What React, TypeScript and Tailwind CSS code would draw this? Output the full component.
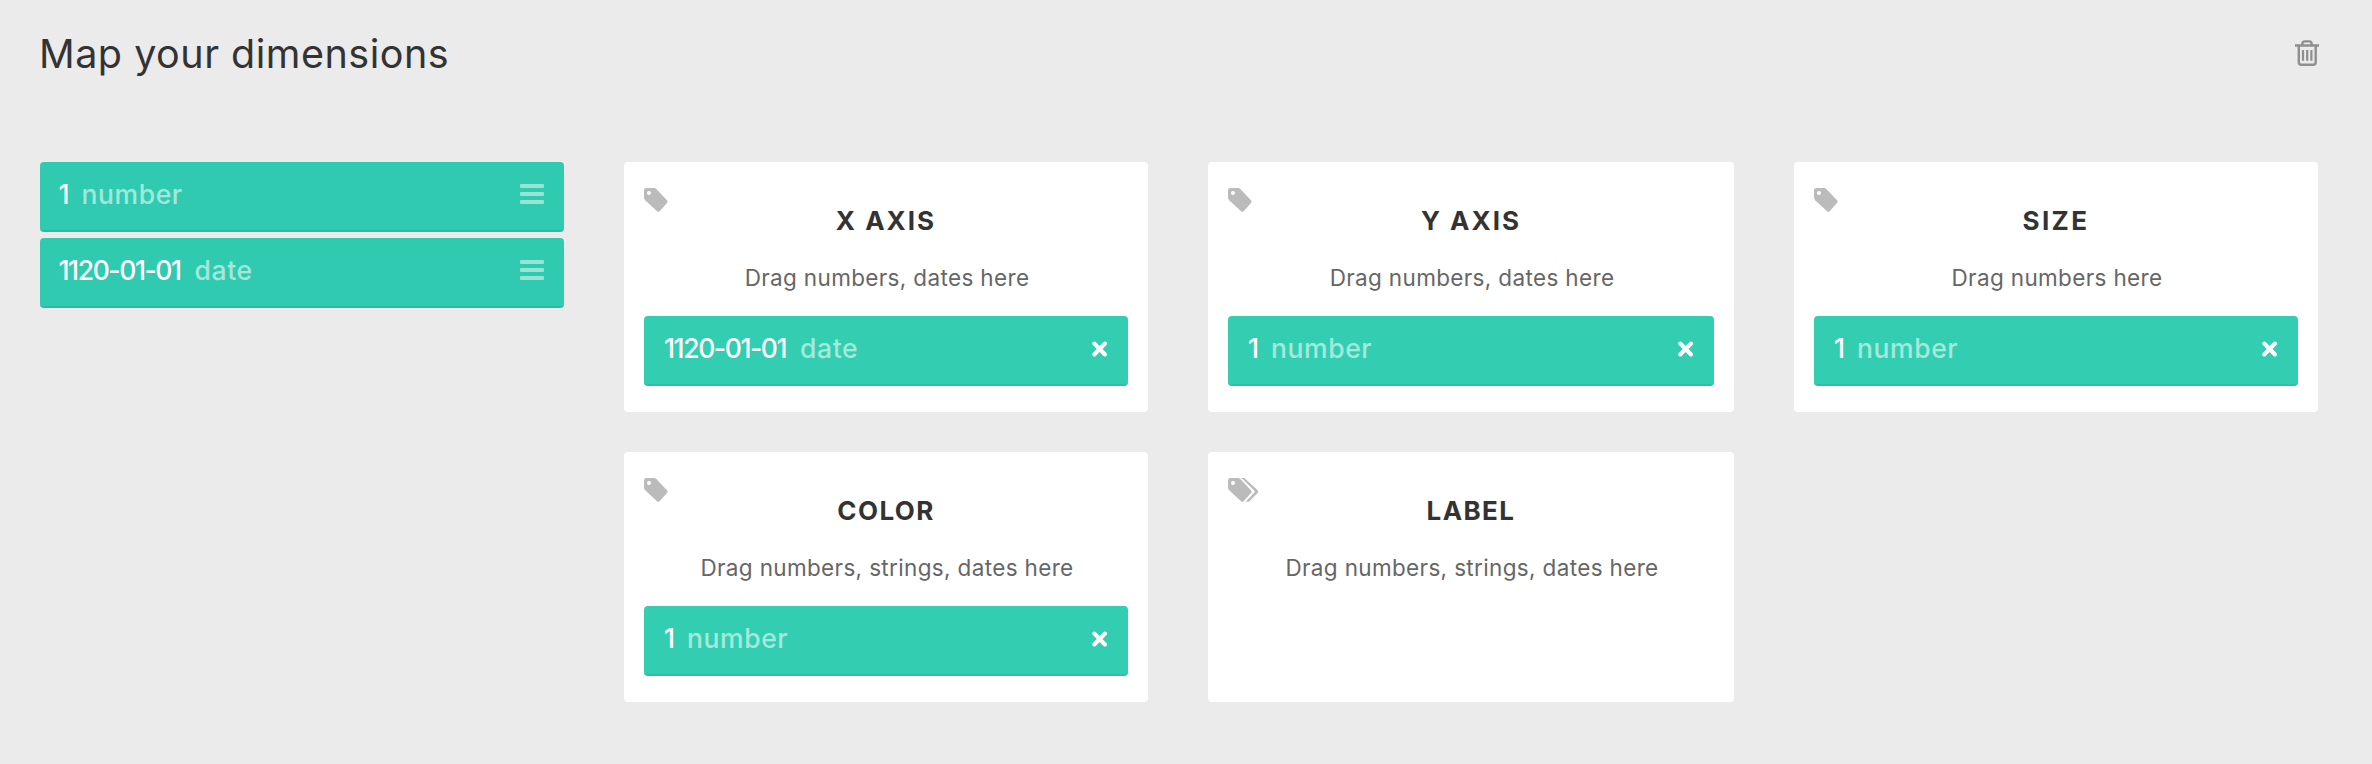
import React from "react";

function TagIcon({ multiple = false }: { multiple?: boolean }) {
  return (
    <svg width="31" height="24" viewBox="0 0 31 24" fill="#bbb" className="block">
      <path
        fillRule="evenodd"
        d="M2.400 0H9.400C10.700 0 11.900.5 12.800 1.400L23 12.200C23.800 13 23.800 14.200 23 15L15.600 23.200C14.900 24 13.800 24 13.100 23.200L1.400 12.400C.5 11.500 0 10.500 0 9.200V2.400A2.400 2.400 0 0 1 2.400 0ZM5 3A2 2 0 1 0 5 7A2 2 0 1 0 5 3Z"
      />
      {multiple && (
        <path d="M12 0H14.600C15.900 0 17.100.5 18 1.400L29.600 12.200C30.400 13 30.400 14.200 29.600 15L21.400 23.300C20.600 24 19 24 18 23.200L26.200 14.800C26.900 14.100 26.900 13.300 26.200 12.600L15 1.600C14.200.8 13.200.2 12 0Z" />
      )}
    </svg>
  );
}

function TrashIcon() {
  return (
    <svg width="24" height="26" viewBox="0 0 24 26" fill="none" stroke="#8e8e8e" strokeWidth="2.400" className="block">
      <path d="M0 5.500H24M7.400 5V3.700Q7.400 1.400 9.700 1.400H14.300Q16.600 1.400 16.600 3.700V5M3.800 6V22.300Q3.800 24.800 6.300 24.800H18.200Q20.700 24.800 20.700 22.300V6" />
      <path strokeWidth="2.200" d="M8 10V20.800M12.200 10V20.800M16.400 10V20.800" />
    </svg>
  );
}

function BurgerIcon() {
  return (
    <svg width="24" height="20" viewBox="0 0 24 20" fill="#fff" fillOpacity="0.5" className="block">
      <rect width="24" height="4" rx="1" />
      <rect y="8" width="24" height="4" rx="1" />
      <rect y="16" width="24" height="4" rx="1" />
    </svg>
  );
}

function CloseIcon() {
  return (
    <svg width="16" height="16" viewBox="0 0 16 16" stroke="#fff" strokeWidth="4" strokeLinecap="round" className="block">
      <path d="M2.300 2.500L13 13.500M13 2.500L2.300 13.500" />
    </svg>
  );
}

type Dimension = { name: string; type: "number" | "date" };

const num: Dimension = { name: "1", type: "number" };
const date: Dimension = { name: "1120-01-01", type: "date" };

function Chip({ dim, assigned = false }: { dim: Dimension; assigned?: boolean }) {
  return (
    <div
      className={`flex h-[70px] items-start justify-between rounded border-b-2 pr-5 ${
        assigned ? "border-[#30bfa5] bg-[#33cdb2] pl-5" : "border-[#2cbba0] bg-[#30cab0] pl-[18.5px]"
      }`}
    >
      <div className="flex pt-4 text-[26.500px] leading-8">
        <span className={dim.type === "date" ? "w-[136px] font-medium tracking-[-1.400px] text-white" : "w-[23px] font-medium text-white"}>
          {dim.name}
        </span>
        <span className="font-medium tracking-[0.6px] text-white/55">{dim.type}</span>
      </div>
      <div className={assigned ? "pt-[25px]" : "pt-[22px]"}>{assigned ? <CloseIcon /> : <BurgerIcon />}</div>
    </div>
  );
}

type Slot = { title: string; tracking: string; hint: string; value?: Dimension; multiple?: boolean };

const slots: Slot[] = [
  { title: "X AXIS", tracking: "tracking-[2px]", hint: "Drag numbers, dates here", value: date },
  { title: "Y AXIS", tracking: "tracking-[2px]", hint: "Drag numbers, dates here", value: num },
  { title: "SIZE", tracking: "tracking-[2.4px]", hint: "Drag numbers here", value: num },
  { title: "COLOR", tracking: "tracking-[1.4px]", hint: "Drag numbers, strings, dates here", value: num },
  { title: "LABEL", tracking: "tracking-[1.4px]", hint: "Drag numbers, strings, dates here", multiple: true },
];

function SlotCard({ slot }: { slot: Slot }) {
  return (
    <section className="h-[250px] rounded bg-white px-5 pt-[26px]">
      <div className="h-6">
        <TagIcon multiple={slot.multiple} />
      </div>
      <h2 className={`-mt-[7px] text-center text-[26px] leading-8 font-bold text-[#333] ${slot.tracking}`}>{slot.title}</h2>
      <p className="mt-[25px] mb-[22px] pl-0.5 text-center text-[22.500px] leading-8 tracking-[0.35px] text-[#666]">{slot.hint}</p>
      {slot.value && <Chip dim={slot.value} assigned />}
    </section>
  );
}

export default function App() {
  return (
    <main className="h-[764px] w-[2372px] overflow-hidden bg-[#ebebeb] pl-10 font-['Inter','Liberation_Sans',sans-serif]">
      <header className="flex h-[162px] w-[2279px] items-start justify-between">
        <h1 className="-ml-px pt-[30px] text-[39.500px] leading-[48px] tracking-[0.5px] text-[#333]">Map your dimensions</h1>
        <button type="button" aria-label="Clear" className="pt-10">
          <TrashIcon />
        </button>
      </header>
      <div className="grid grid-cols-[524px_1694px] gap-[60px]">
        <div className="flex flex-col gap-1.5">
          <Chip dim={num} />
          <Chip dim={date} />
        </div>
        <div className="grid grid-cols-[524px_526px_524px] gap-x-[60px] gap-y-10">
          {slots.map((slot) => (
            <SlotCard key={slot.title} slot={slot} />
          ))}
        </div>
      </div>
    </main>
  );
}
